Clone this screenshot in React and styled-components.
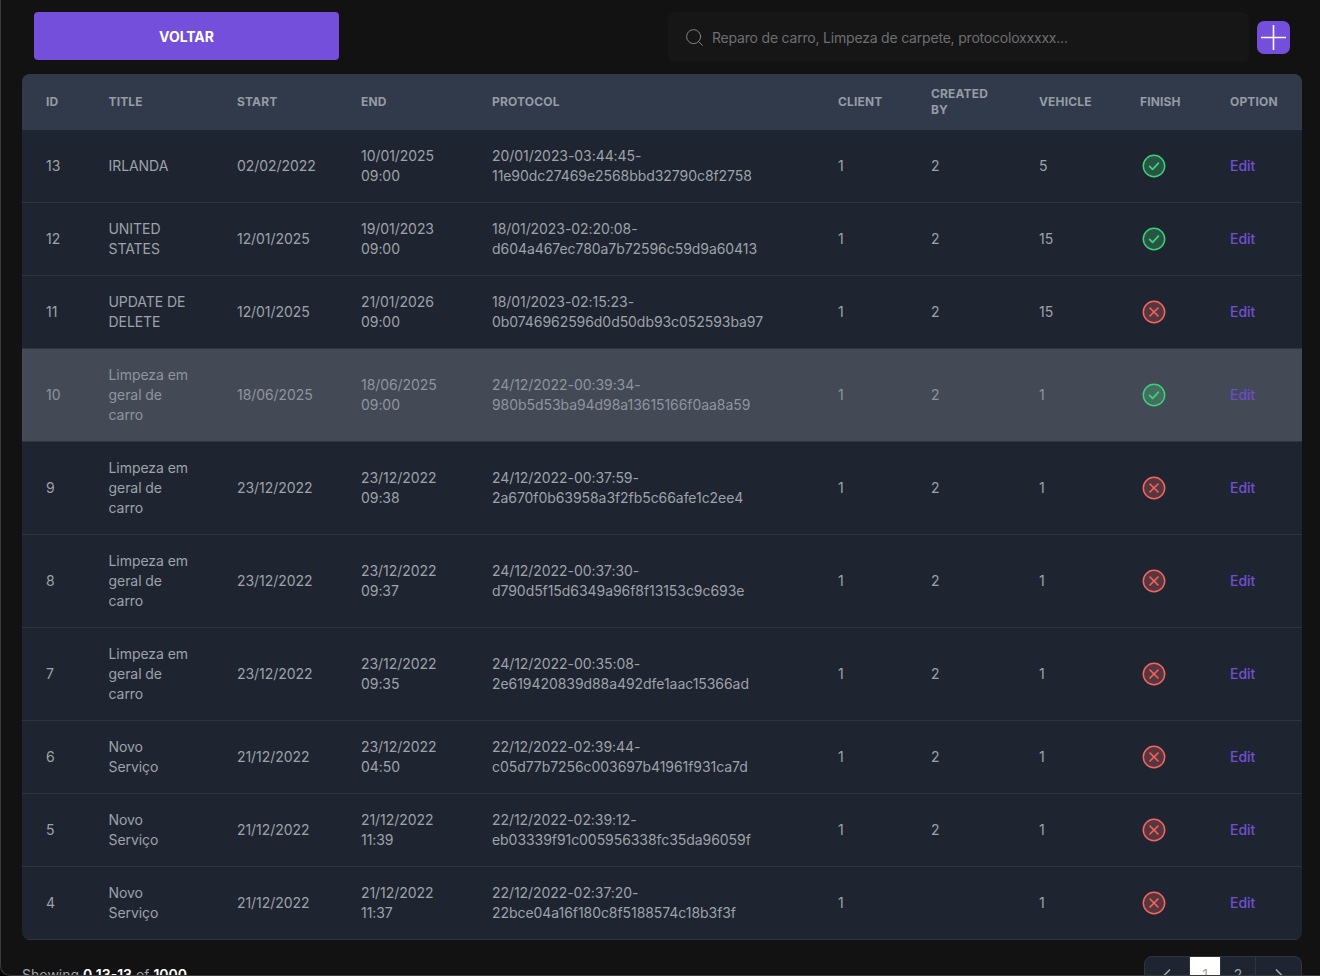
import React from "react"
import styled, { createGlobalStyle } from "styled-components"
import { ChevronLeft, ChevronRight, Search } from "lucide-react"

const GlobalStyle = createGlobalStyle`
  html, body {
    margin: 0;
    height: 100%;
    background: #000;
    overflow: hidden;
  }
  body {
    font-family: Inter, "Noto Sans", sans-serif;
    -webkit-font-smoothing: antialiased;
  }
`

const Screen = styled.div`
  box-sizing: border-box;
  width: 1320px;
  height: 976px;
  overflow: hidden;
  padding: 12px 18px 0 21px;
  background: #121212;
  border-left: 1px solid #3b3b3b;
  border-bottom: 1px solid #3b3b3b;
  border-bottom-left-radius: 10px;
`

const TopBar = styled.div`
  display: flex;
  align-items: flex-start;
  height: 50px;
  padding: 0 12px;
`

const BackButton = styled.button`
  width: 305px;
  height: 48px;
  padding: 1px 0 0;
  border: 0;
  border-radius: 4px;
  background: #744fdb;
  color: #fff;
  font: 700 14px/20px Inter, sans-serif;
  letter-spacing: -0.02px;
`

const SearchBox = styled.div`
  display: flex;
  align-items: center;
  gap: 7px;
  box-sizing: border-box;
  width: 581px;
  height: 50px;
  margin-left: auto;
  padding: 1px 0 0 16px;
  border-radius: 6px;
  background: #161617;
  color: #6d6e70;
  font-size: 14px;
  line-height: 20px;
  letter-spacing: -0.2px;
`

const AddButton = styled.button`
  display: flex;
  align-items: center;
  justify-content: center;
  width: 33px;
  height: 33px;
  margin: 9px 0 0 8px;
  padding: 0;
  border: 0;
  border-radius: 7px;
  background: #744fdb;
`

const TableCard = styled.div`
  margin-top: 12px;
  border-radius: 8px;
  overflow: hidden;
  background: #1e2530;
`

const Table = styled.table`
  width: 100%;
  table-layout: fixed;
  border-collapse: collapse;
  font-size: 14px;
  line-height: 20px;
  color: #9ea2a9;
`

const Col = styled.col`
  width: ${(p) => p.$w}px;
`

const HeadRow = styled.tr`
  background: #313a4a;
`

const Th = styled.th`
  padding: 12px 24px;
  box-sizing: border-box;
  height: 56px;
  text-align: left;
  font-size: 12px;
  line-height: 16px;
  font-weight: 700;
  letter-spacing: 0.16px;
  text-transform: uppercase;
  color: #969ba4;
`

const Row = styled.tr`
  background: ${(p) => (p.$active ? "#434a56" : "#1e2530")};
  color: ${(p) => (p.$active ? "#8f949e" : "#9ea2a9")};
  border-bottom: 1px solid #2d3543;
`

const Td = styled.td`
  padding: 16px 24px;
  letter-spacing: -0.06px;
`

const EditLink = styled.a`
  color: ${(p) => (p.$active ? "#6b4ccb" : "#7150d4")};
  font-weight: 500;
`

const Footer = styled.div`
  display: flex;
  align-items: center;
  justify-content: space-between;
  margin-top: 16px;
  font-size: 14px;
  line-height: 20px;
  color: #9ea2a9;
`

const Strong = styled.span`
  font-weight: 600;
  color: #fff;
`

const Pager = styled.nav`
  display: flex;
  height: 38px;
`

const PageItem = styled.div`
  display: flex;
  align-items: center;
  justify-content: center;
  box-sizing: border-box;
  width: ${(p) => p.$w}px;
  border: 1px solid #2d3543;
  border-left-width: ${(p) => (p.$start ? 1 : 0)}px;
  border-radius: ${(p) => (p.$start ? "8px 0 0 8px" : p.$end ? "0 8px 8px 0" : "0")};
  background: ${(p) => (p.$current ? "#fff" : "#1e2530")};
  color: #9ea2a9;
`

const StatusIcon = ({ ok }) => {
  const color = ok ? "#3fcf78" : "#f26565"
  return (
    <svg width="24" height="24" viewBox="0 0 24 24" fill="none" style={{ display: "block", marginLeft: 2 }}>
      <circle cx="12" cy="12" r="10.7" stroke={color} strokeWidth="1.5" fill={color} fillOpacity="0.28" />
      {ok ? (
        <path d="M7.6 12.4l3 3 5.8-6.2" stroke={color} strokeWidth="1.8" strokeLinecap="round" strokeLinejoin="round" />
      ) : (
        <path d="M8 8l8 8M16 8l-8 8" stroke={color} strokeWidth="1.6" strokeLinecap="round" />
      )}
    </svg>
  )
}

const columns = [62.5, 128.5, 124, 131, 346, 93, 108, 101, 90, 96]
const headers = ["Id", "Title", "Start", "End", "Protocol", "Client", "Created by", "Vehicle", "Finish", "Option"]

const rows = [
  ["13", "IRLANDA", "02/02/2022", "10/01/2025 09:00", "20/01/2023-03:44:45-11e90dc27469e2568bbd32790c8f2758", "1", "2", "5", true],
  ["12", "UNITED STATES", "12/01/2025", "19/01/2023 09:00", "18/01/2023-02:20:08-d604a467ec780a7b72596c59d9a60413", "1", "2", "15", true],
  ["11", "UPDATE DE DELETE", "12/01/2025", "21/01/2026 09:00", "18/01/2023-02:15:23-0b0746962596d0d50db93c052593ba97", "1", "2", "15", false],
  ["10", "Limpeza em geral de carro", "18/06/2025", "18/06/2025 09:00", "24/12/2022-00:39:34-980b5d53ba94d98a13615166f0aa8a59", "1", "2", "1", true],
  ["9", "Limpeza em geral de carro", "23/12/2022", "23/12/2022 09:38", "24/12/2022-00:37:59-2a670f0b63958a3f2fb5c66afe1c2ee4", "1", "2", "1", false],
  ["8", "Limpeza em geral de carro", "23/12/2022", "23/12/2022 09:37", "24/12/2022-00:37:30-d790d5f15d6349a96f8f13153c9c693e", "1", "2", "1", false],
  ["7", "Limpeza em geral de carro", "23/12/2022", "23/12/2022 09:35", "24/12/2022-00:35:08-2e619420839d88a492dfe1aac15366ad", "1", "2", "1", false],
  ["6", "Novo Serviço", "21/12/2022", "23/12/2022 04:50", "22/12/2022-02:39:44-c05d77b7256c003697b41961f931ca7d", "1", "2", "1", false],
  ["5", "Novo Serviço", "21/12/2022", "21/12/2022 11:39", "22/12/2022-02:39:12-eb03339f91c005956338fc35da96059f", "1", "2", "1", false],
  ["4", "Novo Serviço", "21/12/2022", "21/12/2022 11:37", "22/12/2022-02:37:20-22bce04a16f180c8f5188574c18b3f3f", "1", "", "1", false],
]

const App = () => (
  <Screen>
    <GlobalStyle />
    <TopBar>
      <BackButton>VOLTAR</BackButton>
      <SearchBox>
        <Search size={21} strokeWidth={1.1} color="#85868a" />
        Reparo de carro, Limpeza de carpete, protocoloxxxxx...
      </SearchBox>
      <AddButton>
        <svg width="27" height="27" viewBox="0 0 27 27" fill="none">
          <path d="M13.5 1v25M1 13.5h25" stroke="#fff" strokeWidth="1.6" />
        </svg>
      </AddButton>
    </TopBar>
    <TableCard>
      <Table>
        <colgroup>
          {columns.map((w, i) => (
            <Col key={i} $w={w} />
          ))}
        </colgroup>
        <thead>
          <HeadRow>
            {headers.map((h) => (
              <Th key={h}>{h}</Th>
            ))}
          </HeadRow>
        </thead>
        <tbody>
          {rows.map((r) => {
            const active = r[0] === "10"
            return (
              <Row key={r[0]} $active={active}>
                {r.slice(0, 8).map((v, j) => (
                  <Td key={j}>{v}</Td>
                ))}
                <Td>
                  <StatusIcon ok={r[8]} />
                </Td>
                <Td>
                  <EditLink $active={active}>Edit</EditLink>
                </Td>
              </Row>
            )
          })}
        </tbody>
      </Table>
    </TableCard>
    <Footer>
      <span>
        Showing <Strong>0 13-13</Strong> of <Strong>1000</Strong>
      </span>
      <Pager>
        <PageItem $w={46} $start>
          <ChevronLeft size={20} />
        </PageItem>
        <PageItem $w={31} $current>
          1
        </PageItem>
        <PageItem $w={35}>2</PageItem>
        <PageItem $w={46} $end>
          <ChevronRight size={20} />
        </PageItem>
      </Pager>
    </Footer>
  </Screen>
)

export default App
